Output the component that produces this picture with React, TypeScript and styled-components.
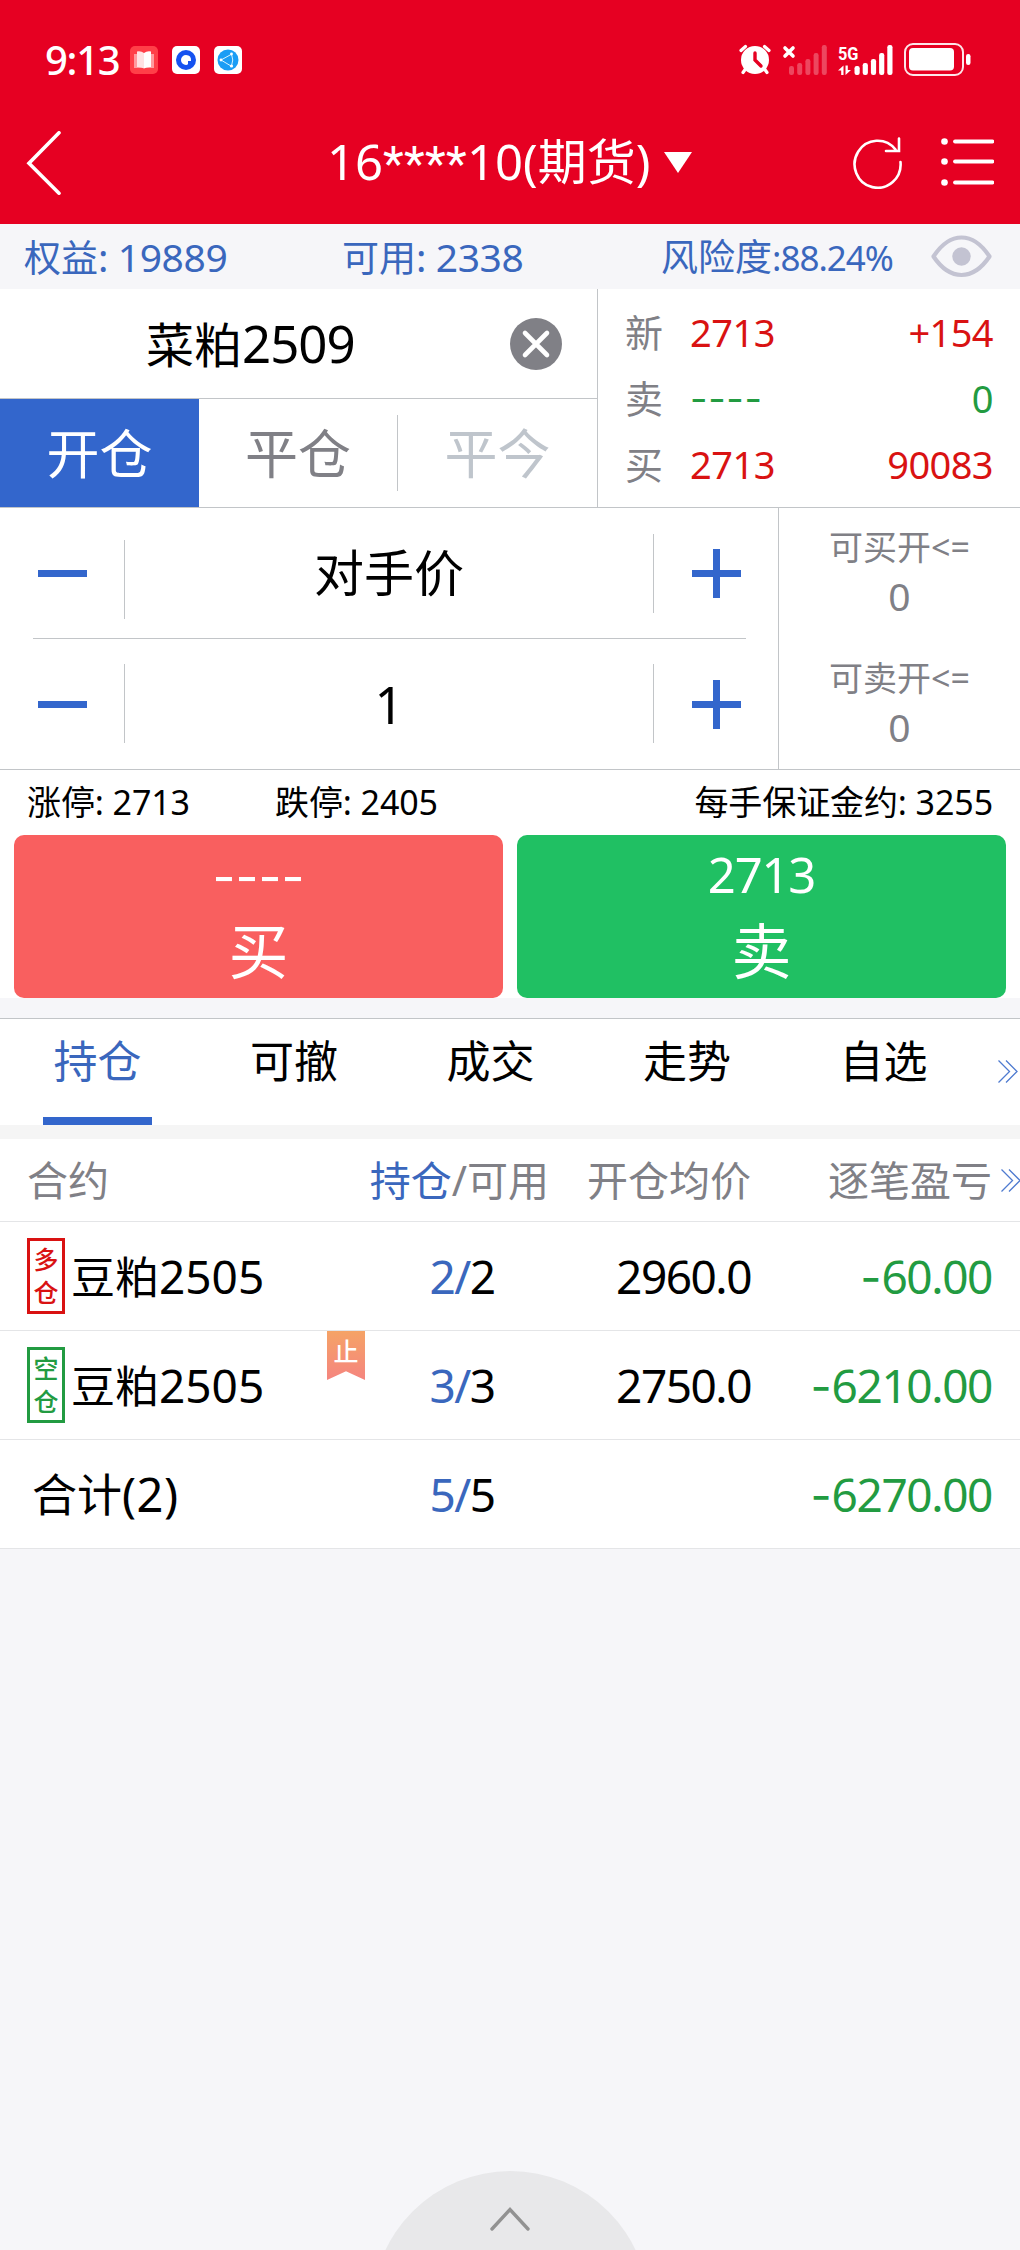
import React from "react";
import styled, { createGlobalStyle } from "styled-components";

const BLUE = "#3366cc";
const INK_BLUE = "#3a67bd";
const RED = "#d91212";
const GREEN = "#229b41";
const GREY = "#808086";
const LINE = "#c2c5c8";
const PALE = "#f6f6f9";

const Global = createGlobalStyle`
  * { box-sizing: border-box; }
  body {
    margin: 0;
    background: ${PALE};
    font-family: "Noto Sans", "Noto Sans CJK SC", sans-serif;
    line-height: 1;
    color: #000;
  }
  svg { display: block; flex: none; }
`;

const Screen = styled.main`
  width: 1020px;
  height: 2250px;
  display: flex;
  flex-direction: column;
  overflow: hidden;
  background: ${PALE};
`;

const Text = styled.span<{ $size: number; $color?: string; $ls?: number; $weight?: number }>`
  font-size: ${(p) => p.$size}px;
  color: ${(p) => p.$color ?? "inherit"};
  letter-spacing: ${(p) => p.$ls ?? 0}px;
  font-weight: ${(p) => p.$weight ?? 400};
  white-space: pre;
`;

const Dashes = styled(Text)`
  font-family: "Inter", sans-serif;
`;

const Mask = styled(Text)`
  font-family: "Roboto", sans-serif;
`;

/* ---------- header ---------- */
const Header = styled.header`
  height: 224px;
  flex: none;
  background: #e60022;
  color: #fff;
`;

const StatusBar = styled.div`
  height: 104px;
  padding: 15px 49px 0 45px;
  display: flex;
  align-items: center;
  justify-content: space-between;
`;

const StatusGroup = styled.div<{ $gap: number }>`
  display: flex;
  align-items: center;
  gap: ${(p) => p.$gap}px;
`;

const Clock = styled(Text)`
  width: 71px;
`;

const NavBar = styled.div`
  height: 120px;
  padding: 0 26px 3px;
  display: grid;
  grid-template-columns: 301px 1fr 141px;
  align-items: center;
`;

const NavTitle = styled.div`
  display: flex;
  align-items: center;
  gap: 14px;
`;

const NavActions = styled.div`
  display: flex;
  align-items: center;
  justify-content: space-between;
`;

/* ---------- account strip ---------- */
const AccountStrip = styled.section`
  height: 65px;
  flex: none;
  padding: 0 28px 0 24px;
  display: grid;
  grid-template-columns: 318px 319px 1fr auto;
  align-items: center;
  color: ${INK_BLUE};
`;

/* ---------- contract + quotes ---------- */
const ContractPanel = styled.section`
  height: 219px;
  flex: none;
  display: grid;
  grid-template-columns: 598px 1fr;
  background: #fff;
  border-bottom: 1px solid ${LINE};
`;

const ContractColumn = styled.div`
  border-right: 1px solid ${LINE};
`;

const ContractName = styled.div`
  height: 110px;
  padding: 0 35px 0 146px;
  display: flex;
  align-items: center;
  justify-content: space-between;
  border-bottom: 1px solid ${LINE};
`;

const OffsetTabs = styled.div`
  height: 108px;
  display: grid;
  grid-template-columns: repeat(3, 1fr);
  align-items: center;
`;

const OffsetTab = styled.button<{ $tone: "active" | "normal" | "disabled" }>`
  height: ${(p) => (p.$tone === "active" ? "108px" : "76px")};
  padding: 0;
  border: 0;
  border-right: ${(p) => (p.$tone === "normal" ? `1px solid ${LINE}` : "0")};
  background: ${(p) => (p.$tone === "active" ? BLUE : "transparent")};
  color: ${(p) => (p.$tone === "active" ? "#fff" : p.$tone === "normal" ? GREY : "#bfc5cc")};
  font: inherit;
`;

const Quotes = styled.div`
  padding: 10px 27px;
  display: grid;
  grid-template-rows: repeat(3, 66px);
`;

const QuoteRow = styled.div`
  display: grid;
  grid-template-columns: 65px 1fr auto;
  align-items: center;
`;

/* ---------- price and volume steppers ---------- */
const OrderPanel = styled.section`
  height: 262px;
  flex: none;
  display: grid;
  grid-template-columns: 779px 1fr;
  background: #fff;
  border-bottom: 1px solid ${LINE};
`;

const Steppers = styled.div`
  padding: 0 32px 0 33px;
  border-right: 1px solid ${LINE};
`;

const Stepper = styled.div<{ $divided?: boolean }>`
  height: 131px;
  display: grid;
  grid-template-columns: 91px 1fr 92px;
  align-items: center;
  border-bottom: ${(p) => (p.$divided ? `1px solid ${LINE}` : "0")};
`;

const StepButton = styled.button<{ $side: "left" | "right" }>`
  height: 49px;
  padding: 0 5px;
  border: 0;
  background: transparent;
  display: flex;
  align-items: center;
  justify-content: ${(p) => (p.$side === "left" ? "flex-start" : "flex-end")};
`;

const StepValue = styled.div`
  height: 100%;
  display: grid;
  grid-template-columns: 1px 1fr 1px;
  align-items: center;
  text-align: center;
`;

const Rule = styled.i<{ $top: number }>`
  align-self: start;
  width: 1px;
  height: 79px;
  margin-top: ${(p) => p.$top}px;
  background: ${LINE};
`;

const Limits = styled.div`
  display: grid;
  grid-template-rows: 131px 131px;
  color: ${GREY};
`;

const Limit = styled.div`
  padding-top: 22px;
  display: flex;
  flex-direction: column;
  align-items: center;
  gap: 12px;
`;

/* ---------- margins and order buttons ---------- */
const MarginRow = styled.section`
  height: 65px;
  flex: none;
  padding: 0 27px 1px;
  display: grid;
  grid-template-columns: 248px 1fr auto;
  align-items: center;
  background: #fff;
`;

const OrderButtons = styled.section`
  height: 163px;
  flex: none;
  padding: 0 14px;
  display: grid;
  grid-template-columns: 1fr 1fr;
  gap: 14px;
  background: #fff;
`;

const OrderButton = styled.button<{ $bg: string }>`
  border: 0;
  border-radius: 10px;
  background: ${(p) => p.$bg};
  color: #fff;
  font: inherit;
  padding: 14px 0 0;
  display: flex;
  flex-direction: column;
  align-items: center;
  justify-content: flex-start;
`;

const OrderPrice = styled.div<{ $empty?: boolean }>`
  height: 51px;
  margin-bottom: 21px;
  padding-top: ${(p) => (p.$empty ? 5 : 0)}px;
  display: flex;
  align-items: center;
`;

const Spacer = styled.div<{ $h: number; $bg: string }>`
  height: ${(p) => p.$h}px;
  flex: none;
  background: ${(p) => p.$bg};
`;

/* ---------- list tabs ---------- */
const ListTabs = styled.nav`
  height: 107px;
  flex: none;
  padding-right: 2px;
  display: grid;
  grid-template-columns: repeat(5, 196.5px) 1fr;
  background: #fff;
  border-top: 1px solid ${LINE};
`;

const ListTab = styled.div<{ $active?: boolean }>`
  width: 109px;
  height: 106px;
  margin-left: 43px;
  padding-top: 20px;
  text-align: center;
  color: ${(p) => (p.$active ? INK_BLUE : "#000")};
  border-bottom: 8px solid ${(p) => (p.$active ? BLUE : "transparent")};
`;

const MoreTabs = styled.div`
  padding-top: 41px;
  justify-self: end;
`;

/* ---------- positions ---------- */
const TableRow = styled.div<{ $head?: boolean }>`
  height: ${(p) => (p.$head ? 83 : 109)}px;
  flex: none;
  display: grid;
  grid-template-columns: 327px 38px 184px 202px 241px 1fr;
  align-items: center;
  background: #fff;
  border-bottom: 1px solid #e4e5e7;
`;

const NameCell = styled.div<{ $left: number }>`
  padding-left: ${(p) => p.$left}px;
  display: flex;
  align-items: center;
  gap: 6px;
`;

const Cell = styled.div<{ $pad?: number }>`
  text-align: right;
  white-space: nowrap;
  padding-right: ${(p) => p.$pad ?? 0}px;
`;

const SideBadge = styled.div<{ $color: string }>`
  width: 38px;
  height: 76px;
  border: 3px solid ${(p) => p.$color};
  color: ${(p) => p.$color};
  display: flex;
  flex-direction: column;
  align-items: center;
  justify-content: center;
  gap: 8px;
`;

const Ribbon = styled.div`
  align-self: start;
  width: 38px;
  height: 49px;
  padding-top: 8px;
  text-align: center;
  color: #fff;
  background: linear-gradient(#f5a366, #f5857f);
  clip-path: polygon(0 0, 100% 0, 100% 100%, 50% 82%, 0 100%);
`;

/* ---------- drawer handle ---------- */
const Footer = styled.footer`
  margin-top: auto;
  height: 79px;
  display: flex;
  justify-content: center;
  overflow: hidden;
`;

const Handle = styled.div`
  width: 277px;
  height: 277px;
  flex: none;
  border-radius: 50%;
  background: #e8e8ea;
  padding-top: 34px;
  display: flex;
  justify-content: center;
`;

/* ---------- icons ---------- */
const BookApp = () => (
  <svg width="28" height="28" viewBox="0 0 28 28">
    <rect width="28" height="28" rx="5" fill="#ff3f48" />
    <path d="M4 8h20v14H4z" fill="#ff9a9e" />
    <path d="M7 5.5q4-.8 7 1.5v15.5q-3-2-7-1.5z" fill="#ffe2e3" />
    <path d="M21 5.5q-4-.8-7 1.5v15.5q3-2 7-1.5z" fill="#fff" />
  </svg>
);

const RingApp = () => (
  <svg width="28" height="28" viewBox="0 0 28 28">
    <rect width="28" height="28" rx="5" fill="#fff" />
    <circle cx="14" cy="14" r="10" fill="#1552f0" />
    <path d="M14 9a5 5 0 1 0 0 10q1.5 0 2-1v-3h3q.5-6-5-6z" fill="#fff" />
  </svg>
);

const GlobeApp = () => (
  <svg width="28" height="28" viewBox="0 0 28 28">
    <rect width="28" height="28" rx="5" fill="#fff" />
    <circle cx="14" cy="14" r="10.5" fill="#1b9df5" />
    <path d="M7 14 17 8.5M7 14l10 6M17.5 8q2.5 6 0 12" stroke="#d5f3ff" strokeWidth="1" fill="none" />
    <circle cx="7" cy="14" r="1.4" fill="#fff" />
    <circle cx="17.5" cy="8" r="1.4" fill="#fff" />
    <circle cx="17.5" cy="20" r="1.6" fill="#fff" />
  </svg>
);

const Alarm = () => (
  <svg width="32" height="31" viewBox="0 0 32 31" fill="none" stroke="#fff" strokeWidth="3.2" strokeLinecap="round">
    <circle cx="16" cy="16" r="14" fill="#fff" stroke="none" />
    <path d="M2 6.5 6.5 2.5M30 6.5 25.5 2.5M6.5 25 4 28.5M25.5 25l2.5 3.5" />
    <path d="M16 9v7l6 6" stroke="#e60022" strokeWidth="3.4" />
  </svg>
);

const BARS = [9, 12, 16, 22, 30];

const NoSignal = () => (
  <svg width="45" height="30" viewBox="0 0 45 30">
    <path d="M3 3l8 8M11 3l-8 8" stroke="#fff" strokeWidth="3.6" strokeLinecap="round" />
    {BARS.map((h, i) => (
      <rect key={h} x={7 + i * 8.2} y={30 - h} width="5" height={h} rx="2.2" fill="#fff" opacity="0.28" />
    ))}
  </svg>
);

const Signal5G = () => (
  <svg width="55" height="30" viewBox="0 0 55 30" overflow="visible">
    <text x="0" y="14.5" fill="#fff" fontSize="19" fontWeight="700" fontFamily="Roboto" textLength="20.5" lengthAdjust="spacingAndGlyphs">
      5G
    </text>
    <path d="M0 25.500 5.500 20.500V30H3.200V25.500zM7.500 20.500H9.800V25H13L7.500 30z" fill="#fff" />
    {BARS.map((h, i) => (
      <rect key={h} x={16.5 + i * 8.2} y={30 - h} width="5.2" height={h} rx="2.2" fill="#fff" />
    ))}
  </svg>
);

const Battery = () => (
  <svg width="67" height="33" viewBox="0 0 67 33">
    <rect x="1" y="1" width="58" height="31" rx="8" fill="none" stroke="#fff" strokeOpacity="0.9" strokeWidth="2" />
    <rect x="5" y="5" width="45" height="22.5" rx="4" fill="#fff" />
    <rect x="62" y="11" width="4.5" height="11" rx="2.2" fill="#fff" />
  </svg>
);

const Back = () => (
  <svg width="35" height="64" viewBox="0 0 35 64" fill="none" stroke="#fff" strokeWidth="3.6">
    <path d="M33 1.8 3 32.3l30 29.9" strokeLinecap="round" />
  </svg>
);

const Refresh = () => (
  <svg width="49" height="52" viewBox="0 0 49 52" fill="none" stroke="#fff" strokeWidth="2.6">
    <path d="M47.5 25A23 23.5 0 1 1 42.500 12.5M46 1.5v12.5H33" strokeLinecap="round" />
  </svg>
);

const ListIcon = () => (
  <svg width="53" height="49" viewBox="0 0 53 49">
    {[3.5, 23.5, 44.5].map((y) => (
      <g key={y}>
        <circle cx="3.5" cy={y} r="3.3" fill="#fff" />
        <path d={`M14 ${y}h37.5`} stroke="#fff" strokeWidth="3.8" strokeLinecap="round" />
      </g>
    ))}
  </svg>
);

const Caret = () => (
  <svg width="28" height="21" viewBox="0 0 28 21">
    <path d="M0 0h28L14 21z" fill="#fff" />
  </svg>
);

const Eye = () => (
  <svg width="61" height="43" viewBox="0 0 61 43">
    <path d="M2.5 21.5Q15 2.5 30.5 2.5T58.5 21.5Q46 40 30.5 40T2.5 21.5z" fill="none" stroke="#c3c3d2" strokeWidth="4.2" strokeLinejoin="round" />
    <circle cx="30.5" cy="21.5" r="9.2" fill="#c3c3d2" />
  </svg>
);

const Clear = () => (
  <svg width="52" height="52" viewBox="0 0 52 52">
    <circle cx="26" cy="26" r="26" fill="#808086" />
    <path d="M15 15l22 22M37 15 15 37" stroke="#fff" strokeWidth="4.6" strokeLinecap="round" />
  </svg>
);

const Minus = () => (
  <svg width="49" height="49" viewBox="0 0 49 49">
    <path d="M0 21h49v7H0z" fill={BLUE} />
  </svg>
);

const Plus = () => (
  <svg width="49" height="49" viewBox="0 0 49 49">
    <path d="M0 21h49v7H0zM21 0h7v49h-7z" fill={BLUE} />
  </svg>
);

const DoubleChevron = () => (
  <svg width="20" height="23" viewBox="0 0 20 23" fill="none" stroke="#4f7bd0" strokeWidth="1.3">
    <path d="M.5.5 11.5 11.5.5 22.5M8 .5l11 11-11 11" />
  </svg>
);

const UpChevron = () => (
  <svg width="42" height="27" viewBox="0 0 42 27" fill="none" stroke="#929292" strokeWidth="3.4" strokeLinecap="round">
    <path d="M3 24 21 4.5 39 24" />
  </svg>
);

/* ---------- data ---------- */
const quotes = [
  { label: "新", price: "2713", change: "+154", color: RED },
  { label: "卖", price: "----", change: "0", color: GREEN },
  { label: "买", price: "2713", change: "90083", color: RED },
];

const positions = [
  { side: "多仓", color: RED, held: "2", free: "2", price: "2960.0", profit: "60.00", stop: false },
  { side: "空仓", color: GREEN, held: "3", free: "3", price: "2750.0", profit: "6210.00", stop: true },
];

const Profit = ({ value }: { value: string }) => (
  <Cell>
    <Dashes $size={46} $color={GREEN}>-</Dashes>
    <Text $size={46} $color={GREEN} $ls={-1.4}>{value}</Text>
  </Cell>
);

const Holding = ({ held, free }: { held: string; free: string }) => (
  <Cell $pad={54}>
    <Text $size={46} $color={INK_BLUE} $ls={-1.6}>{held}/</Text>
    <Text $size={46} $ls={-1}>{free}</Text>
  </Cell>
);

export default function App() {
  return (
    <Screen>
      <Global />
      <Header>
        <StatusBar>
          <StatusGroup $gap={14}>
            <Clock $size={40} $ls={-1.3} $weight={500}>9:13</Clock>
            <BookApp />
            <RingApp />
            <GlobeApp />
          </StatusGroup>
          <StatusGroup $gap={11}>
            <Alarm />
            <NoSignal />
            <Signal5G />
            <Battery />
          </StatusGroup>
        </StatusBar>
        <NavBar>
          <Back />
          <NavTitle>
            <span>
              <Text $size={49}>16</Text>
              <Mask $size={48} $ls={0.3}>****</Mask>
              <Text $size={49}>10(期货)</Text>
            </span>
            <Caret />
          </NavTitle>
          <NavActions>
            <Refresh />
            <ListIcon />
          </NavActions>
        </NavBar>
      </Header>

      <AccountStrip>
        <span>
          <Text $size={37}>权益</Text>
          <Text $size={39} $ls={-0.4}>: 19889</Text>
        </span>
        <span>
          <Text $size={37}>可用</Text>
          <Text $size={39} $ls={-0.4}>: 2338</Text>
        </span>
        <span>
          <Text $size={37}>风险度</Text>
          <Text $size={35} $ls={-1}>:88.24%</Text>
        </span>
        <Eye />
      </AccountStrip>

      <ContractPanel>
        <ContractColumn>
          <ContractName>
            <span>
              <Text $size={48}>菜粕</Text>
              <Text $size={51} $ls={-1}>2509</Text>
            </span>
            <Clear />
          </ContractName>
          <OffsetTabs>
            <OffsetTab $tone="active"><Text $size={53}>开仓</Text></OffsetTab>
            <OffsetTab $tone="normal"><Text $size={53}>平仓</Text></OffsetTab>
            <OffsetTab $tone="disabled"><Text $size={53}>平今</Text></OffsetTab>
          </OffsetTabs>
        </ContractColumn>
        <Quotes>
          {quotes.map((q) => (
            <QuoteRow key={q.label}>
              <Text $size={38} $color={GREY}>{q.label}</Text>
              {q.price === "----" ? (
                <Dashes $size={38} $color={q.color} $ls={0.7}>{q.price}</Dashes>
              ) : (
                <Text $size={38} $color={q.color} $ls={-0.5}>{q.price}</Text>
              )}
              <Text $size={38} $color={q.color} $ls={-0.6}>{q.change}</Text>
            </QuoteRow>
          ))}
        </Quotes>
      </ContractPanel>

      <OrderPanel>
        <Steppers>
          <Stepper $divided>
            <StepButton $side="left"><Minus /></StepButton>
            <StepValue>
              <Rule $top={32} />
              <Text $size={50}>对手价</Text>
              <Rule $top={26} />
            </StepValue>
            <StepButton $side="right"><Plus /></StepButton>
          </Stepper>
          <Stepper>
            <StepButton $side="left"><Minus /></StepButton>
            <StepValue>
              <Rule $top={25} />
              <Text $size={51}>1</Text>
              <Rule $top={25} />
            </StepValue>
            <StepButton $side="right"><Plus /></StepButton>
          </Stepper>
        </Steppers>
        <Limits>
          <Limit>
            <Text $size={34}>可买开&lt;=</Text>
            <Text $size={39}>0</Text>
          </Limit>
          <Limit>
            <Text $size={34}>可卖开&lt;=</Text>
            <Text $size={39}>0</Text>
          </Limit>
        </Limits>
      </OrderPanel>

      <MarginRow>
        <Text $size={34} $ls={-0.1}>涨停: 2713</Text>
        <Text $size={34} $ls={-0.1}>跌停: 2405</Text>
        <Text $size={34} $ls={-0.1}>每手保证金约: 3255</Text>
      </MarginRow>

      <OrderButtons>
        <OrderButton $bg="#f95f5f">
          <OrderPrice $empty><Dashes $size={50}>----</Dashes></OrderPrice>
          <Text $size={60}>买</Text>
        </OrderButton>
        <OrderButton $bg="#20c063">
          <OrderPrice><Text $size={49} $ls={-1.2}>2713</Text></OrderPrice>
          <Text $size={60}>卖</Text>
        </OrderButton>
      </OrderButtons>
      <Spacer $h={20} $bg={PALE} />

      <ListTabs>
        {["持仓", "可撤", "成交", "走势", "自选"].map((label, i) => (
          <ListTab key={label} $active={i === 0}>
            <Text $size={44}>{label}</Text>
          </ListTab>
        ))}
        <MoreTabs><DoubleChevron /></MoreTabs>
      </ListTabs>
      <Spacer $h={14} $bg="#f5f5f5" />

      <TableRow $head>
        <NameCell $left={27}><Text $size={41} $color={GREY}>合约</Text></NameCell>
        <span />
        <Cell>
          <Text $size={41} $color={INK_BLUE}>持仓</Text>
          <Text $size={41} $color={GREY}>/可用</Text>
        </Cell>
        <Cell><Text $size={41} $color={GREY}>开仓均价</Text></Cell>
        <Cell><Text $size={41} $color={GREY}>逐笔盈亏</Text></Cell>
        <NameCell $left={9}><DoubleChevron /></NameCell>
      </TableRow>
      {positions.map((p) => (
        <TableRow key={p.side}>
          <NameCell $left={27}>
            <SideBadge $color={p.color}>
              {[...p.side].map((c) => <Text key={c} $size={25} $weight={500}>{c}</Text>)}
            </SideBadge>
            <span>
              <Text $size={44}>豆粕</Text>
              <Text $size={46}>2505</Text>
            </span>
          </NameCell>
          {p.stop ? <Ribbon><Text $size={25} $weight={500}>止</Text></Ribbon> : <span />}
          <Holding held={p.held} free={p.free} />
          <Cell><Text $size={46} $ls={-1.5}>{p.price}</Text></Cell>
          <Profit value={p.profit} />
        </TableRow>
      ))}
      <TableRow>
        <NameCell $left={32}>
          <span>
            <Text $size={45}>合计</Text>
            <Text $size={47} $ls={0.5}>(2)</Text>
          </span>
        </NameCell>
        <span />
        <Holding held="5" free="5" />
        <span />
        <Profit value="6270.00" />
      </TableRow>

      <Footer>
        <Handle><UpChevron /></Handle>
      </Footer>
    </Screen>
  );
}
